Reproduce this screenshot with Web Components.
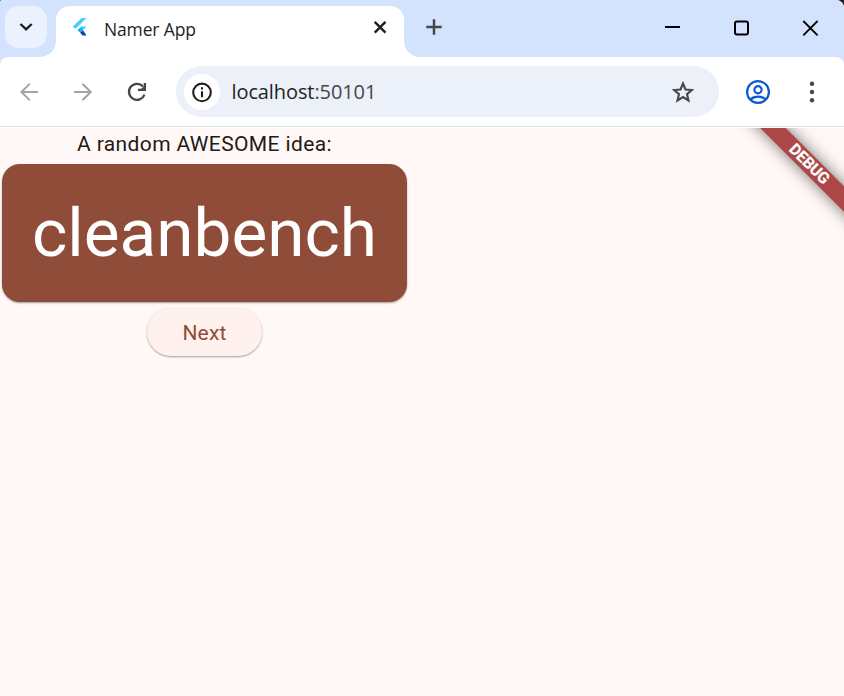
<!DOCTYPE html>
<html lang="en">
<head>
<meta charset="utf-8">
<title>Namer App</title>
<style>
html,body{margin:0;height:100%;overflow:hidden;background:#1c1c1e}
</style>
</head>
<body>
<browser-window>
  <tab-strip slot="tabs"><browser-tab>Namer App</browser-tab></tab-strip>
  <browser-toolbar slot="toolbar"><span>localhost</span><span slot="port">:50101</span></browser-toolbar>
  <namer-page>
    <span slot="label">A random AWESOME idea:</span>
    <big-card>cleanbench</big-card>
    <elevated-button>Next</elevated-button>
    <debug-banner slot="overlay">DEBUG</debug-banner>
  </namer-page>
</browser-window>
<script>
const define = (name, html) => customElements.define(name, class extends HTMLElement {
  constructor() {
    super();
    this.attachShadow({ mode: 'open' }).innerHTML = html;
  }
});

define('browser-window', `
<style>
:host{display:flex;flex-direction:column;width:844px;height:696px;overflow:hidden;border-radius:2px 8px 0 0;background:#d3e3fd;font-family:"Open Sans","Noto Sans",sans-serif}
</style>
<slot name="tabs"></slot><slot name="toolbar"></slot><slot></slot>`);

define('tab-strip', `
<style>
:host{display:flex;height:57px;flex:none;background:#d3e3fd}
.search{width:42px;height:42px;margin:6px 9px 0 5px;border-radius:14px;background:#ebf1fd;flex:none}
svg{display:block}
.plus{width:42px;height:42px;margin:6px 0 0 9px}
.controls{margin-left:auto;display:flex;padding-top:6px}
.controls svg{width:69px;height:42px}
</style>
<div class="search"><svg width="42" height="42" fill="none" stroke="#1f1f1f" stroke-width="2.4"><path d="M15.5 18l5.6 5.4L26.7 18"/></svg></div>
<slot></slot>
<div class="plus"><svg width="42" height="42" stroke="#474747" stroke-width="2.5"><path d="M13.3 21h15.4M21 13.3v15.4"/></svg></div>
<div class="controls">
<svg viewBox="0 0 69 42" stroke="#000" stroke-width="2"><path d="M28 21h15"/></svg>
<svg viewBox="0 0 69 42" fill="none" stroke="#000" stroke-width="2"><rect x="29" y="15.5" width="13" height="13" rx="2"/></svg>
<svg viewBox="0 0 69 42" stroke="#000" stroke-width="1.8"><path d="M28.3 15l14.3 14.3M42.6 15L28.3 29.3"/></svg>
</div>`);

define('browser-tab', `
<style>
:host{display:flex;position:relative;width:348px;height:51px;margin-top:6px;background:#fff;border-radius:14px 14px 0 0;box-sizing:border-box}
:host::before,:host::after{content:"";position:absolute;bottom:0;width:16px;height:16px}
:host::before{left:-16px;background:radial-gradient(circle at 0 0,transparent 15.6px,#fff 16.2px)}
:host::after{right:-16px;background:radial-gradient(circle at 100% 0,transparent 15.6px,#fff 16.2px)}
.fav{width:18px;height:20px;margin:11px 0 0 15px}
.title{margin:11px 0 0 15px;font-size:17.5px;line-height:25px;color:#1f1f1f;letter-spacing:-.15px;white-space:nowrap}
.close{width:18px;height:18px;margin:12px 15px 0 auto}
</style>
<svg class="fav" viewBox="0 0 18 20"><path fill="#40d0fd" d="M10.6 1H15.4L4.6 11.8 1.6 9.8z"/><path fill="#40c4ff" d="M10.5 9.6h5l-5 4.6-3.9-1.5z"/><path fill="#29a6f6" d="M6.6 13.2l2.8-2.4 2.8 2.5-2.7 2.7z"/><path fill="#01479b" d="M9.2 15.8l3-2.2 3.3 5h-4z"/></svg>
<span class="title"><slot></slot></span>
<svg class="close" viewBox="0 0 18 18" stroke="#1f1f1f" stroke-width="2.4"><path d="M3.7 3.8l10.8 10.8M14.5 3.8L3.7 14.6"/></svg>`);

define('browser-toolbar', `
<style>
:host{display:flex;align-items:flex-start;height:71px;box-sizing:border-box;padding-top:9px;flex:none;background:#fff;border-bottom:1px solid #fff;border-radius:8px 8px 0 0;box-shadow:inset 0 -1px #dfe2e2}
svg{display:block;flex:none}
.nav{display:flex;width:176px}
.nav svg{width:54px;height:52px}
.omni{display:flex;align-items:center;width:543px;height:51px;box-sizing:border-box;border-radius:26px;background:#ebf0f9;padding:0 20px 0 8px}
.info{width:36px;height:36px;border-radius:50%;background:#fff}
.url{margin-left:11.5px;font-size:20px;letter-spacing:-.1px;line-height:30px;color:#1f1f1f;white-space:nowrap}
.port{color:#474747}
.star{margin-left:auto}
</style>
<div class="nav">
<svg viewBox="0 0 54 52" fill="none" stroke="#a5a5a5" stroke-width="2"><path d="M38 26H21.5M29.8 17.7L21.4 26l8.4 8.3"/></svg>
<svg viewBox="0 0 54 52" fill="none" stroke="#a5a5a5" stroke-width="2"><path d="M20 26h16.5M28.4 17.7l8.3 8.3-8.3 8.3"/></svg>
<svg viewBox="0 0 54 52" fill="none" stroke="#474747" stroke-width="2.3"><path d="M34.9 20.4A8 8 0 1 0 36.5 28.6"/><path d="M38 17v8h-8v-2.3h3.3l2.4-2.5V17z" fill="#474747" stroke="none"/></svg>
</div>
<div class="omni">
<div class="info"><svg width="36" height="36" fill="none" stroke="#1f1f1f" stroke-width="2.1"><circle cx="18" cy="18.4" r="8.8"/><path d="M18 17.2v6M18 13.3v2.2"/></svg></div>
<span class="url"><slot></slot><slot name="port" class="port"></slot></span>
<svg class="star" width="32" height="34" fill="none" stroke="#474747" stroke-width="2.1"><path d="M16 8.5l2.5 6 6.3.5-4.8 4.2 1.5 6.2-5.5-3.4-5.5 3.4 1.5-6.2-4.8-4.2 6.3-.5z"/></svg>
</div>
<svg width="78" height="52" fill="none" stroke="#0b57d0" stroke-width="2.2"><circle cx="39" cy="26" r="10.9"/><circle cx="39" cy="23.7" r="3.6"/><path d="M31.3 33.6c4.3-4 11.1-4 15.4 0"/></svg>
<svg width="30" height="52" fill="#474747"><circle cx="15" cy="17.8" r="2.2"/><circle cx="15" cy="26" r="2.2"/><circle cx="15" cy="34.2" r="2.2"/></svg>`);

define('namer-page', `
<style>
:host{display:block;position:relative;flex:1;overflow:hidden;background:#fff8f6;font-family:Roboto,sans-serif}
.column{display:flex;flex-direction:column;align-items:center;width:409px}
.label{height:30px;margin-top:1px;line-height:30px;font-size:21px;letter-spacing:.375px;color:#231917;white-space:nowrap}
</style>
<div class="column"><div class="label"><slot name="label"></slot></div><slot></slot></div>
<slot name="overlay"></slot>`);

define('big-card', `
<style>
:host{display:flex;justify-content:center;align-items:center;width:405px;height:138px;margin-top:5px;box-sizing:border-box;border-radius:18px;background:#8f4c38;color:#fff;box-shadow:0 1px 2px rgba(0,0,0,.38);font-size:67.5px;line-height:78px;white-space:nowrap}
</style><slot></slot>`);

define('elevated-button', `
<style>
:host{display:flex;justify-content:center;align-items:center;width:115px;height:48px;box-sizing:border-box;padding-top:2px;margin-top:6px;border-radius:24px;background:#fff1ed;color:#8f4c38;box-shadow:0 1px 2px rgba(0,0,0,.36);font-size:21px;letter-spacing:.15px;white-space:nowrap}
</style><slot></slot>`);

define('debug-banner', `
<style>
:host{position:absolute;left:709px;top:27px;width:200px;height:18px;transform:rotate(45deg);background:#ac4847;box-shadow:0 0 16px rgba(0,0,0,.55);color:#fff;font-size:16px;letter-spacing:-.35px;font-weight:800;line-height:18px;text-align:center}
</style><slot></slot>`);
</script>
</body>
</html>
